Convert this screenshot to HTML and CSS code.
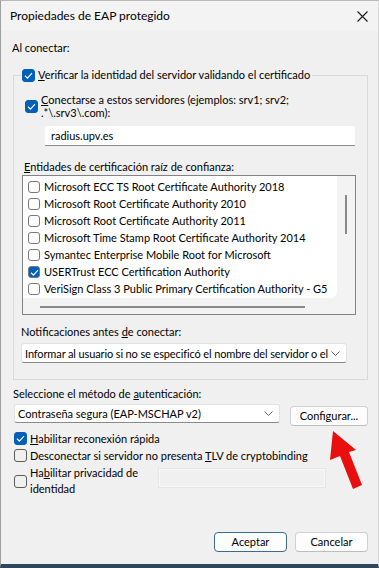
FILE: index.html
```html
<!DOCTYPE html>
<html lang="es">
<head>
    <meta charset="UTF-8">
    <title>Propiedades de EAP protegido</title>
    <link rel="stylesheet" href="styles.css">
</head>
<body>
<div class="window">
    <div class="titlebar">
        <span class="title">Propiedades de EAP protegido</span>
        <svg class="close" width="11" height="11" viewBox="0 0 11 11"><path d="M0.5 0.5L10.5 10.5M10.5 0.5L0.5 10.5" stroke="#1a1a1a" stroke-width="1.1" fill="none"/></svg>
    </div>
    <div class="content">
        <div class="label">Al conectar:</div>
        <fieldset class="group">
            <legend class="check">
                <span class="cb on"><svg width="13" height="13" viewBox="0 0 13 13"><path d="M3 6.8L5.4 9.1L10 4.2" stroke="#fff" stroke-width="1.2" fill="none"/></svg></span>
                <span><u>V</u>erificar la identidad del servidor validando el certificado</span>
            </legend>
            <div class="check servers">
                <span class="cb on"><svg width="13" height="13" viewBox="0 0 13 13"><path d="M3 6.8L5.4 9.1L10 4.2" stroke="#fff" stroke-width="1.2" fill="none"/></svg></span>
                <span><u>C</u>onectarse a estos servidores (ejemplos: srv1; srv2;<br>.*\.srv3\.com):</span>
            </div>
            <div class="textbox server-box">radius.upv.es</div>
            <div class="label sub-label"><u>E</u>ntidades de certificación raíz de confianza:</div>
            <div class="list">
                <div class="list-body">
                    <div class="items">
                        <div class="item"><span class="cb"></span>Microsoft ECC TS Root Certificate Authority 2018</div>
                        <div class="item"><span class="cb"></span>Microsoft Root Certificate Authority 2010</div>
                        <div class="item"><span class="cb"></span>Microsoft Root Certificate Authority 2011</div>
                        <div class="item"><span class="cb"></span>Microsoft Time Stamp Root Certificate Authority 2014</div>
                        <div class="item"><span class="cb"></span>Symantec Enterprise Mobile Root for Microsoft</div>
                        <div class="item"><span class="cb on"><svg width="13" height="13" viewBox="0 0 13 13"><path d="M3 6.8L5.4 9.1L10 4.2" stroke="#fff" stroke-width="1.2" fill="none"/></svg></span>USERTrust ECC Certification Authority</div>
                        <div class="item"><span class="cb"></span>VeriSign Class 3 Public Primary Certification Authority - G5</div>
                    </div>
                    <div class="vscroll"><span class="vthumb"></span></div>
                </div>
                <div class="hscroll"><span class="hthumb"></span></div>
            </div>
            <div class="label notif-label">Notificaciones antes <u>d</u>e conectar:</div>
            <div class="select notif-select">
                <span class="notif-text">Informar al usuario si no se especificó el nombre del servidor o el</span>
                <svg class="chevron" width="9" height="5" viewBox="0 0 9 5"><path d="M0.5 0.5L4.5 4.5L8.5 0.5" stroke="#666" stroke-width="1" fill="none"/></svg>
            </div>
        </fieldset>

        <div class="label method-label">Seleccione el método de <u>a</u>utenticación:</div>
        <div class="method-row">
            <div class="select method-select">
                <span>Contraseña segura (EAP-MSCHAP v2)</span>
                <svg class="chevron" width="9" height="5" viewBox="0 0 9 5"><path d="M0.5 0.5L4.5 4.5L8.5 0.5" stroke="#666" stroke-width="1" fill="none"/></svg>
            </div>
            <div class="button config">Confi<u>g</u>urar...</div>
        </div>

        <div class="check opt fast">
            <span class="cb on"><svg width="13" height="13" viewBox="0 0 13 13"><path d="M3 6.8L5.4 9.1L10 4.2" stroke="#fff" stroke-width="1.2" fill="none"/></svg></span>
            <span><u>H</u>abilitar reconexión rápida</span>
        </div>
        <div class="check opt">
            <span class="cb off"></span>
            <span>Desconectar si servidor no presenta <u>T</u>LV de cryptobinding</span>
        </div>
        <div class="privacy-row">
            <div class="check opt privacy">
                <span class="cb off"></span>
                <span>Ha<u>b</u>ilitar privacidad de<br>identidad</span>
            </div>
            <div class="textbox disabled"></div>
        </div>

        <div class="footer">
            <div class="button default">Aceptar</div>
            <div class="button">Cancelar</div>
        </div>
    </div>

    <svg class="arrow" width="379" height="568" viewBox="0 0 379 568">
        <polygon points="333,431 356,450 349,452 362,485 353,489 340,456 330,460" fill="#ea0f0f"/>
    </svg>
</div>
</body>
</html>
```

FILE: styles.css
```css
* {
    margin: 0;
    padding: 0;
    box-sizing: border-box;
}

body {
    background-color: #f0f0f0;
    font-family: Lato, "Noto Sans", sans-serif;
    font-size: 11px;
    color: #000;
}

.window {
    width: 379px;
    height: 568px;
    position: relative;
    border-left: 1px solid #a0a0a0;
    border-right: 1px solid #d8d8d8;
    border-top: 1px solid #b8b8b8;
    border-bottom: 4px solid #30465a;
    background-color: #f0f0f0;
    overflow: hidden;
}

.titlebar {
    height: 30px;
    display: flex;
    align-items: center;
    justify-content: space-between;
    padding: 0 10px 0 9px;
    background-color: #f3f3f3;
}
.title {
    font-size: 12px;
    line-height: 16px;
}

.content {
    padding: 0 10px 0 11px;
}

.label {
    line-height: 16px;
    height: 16px;
    white-space: nowrap;
}
.content > .label:first-child {
    margin-top: 9px;
}

.check {
    display: flex;
    align-items: center;
    line-height: 16px;
    white-space: nowrap;
}

.cb {
    width: 13px;
    height: 13px;
    border-radius: 3px;
    border: 1px solid #8a8a8a;
    background-color: #fdfdfd;
    display: block;
    flex: none;
}
.cb svg {
    display: block;
    margin: -1px;
}
.cb.on {
    background-color: #005fb8;
    border-color: #005fb8;
}
.cb.off {
    background-color: transparent;
    border-color: #5c5c5c;
}

.group {
    margin: 11px 0 0 1px;
    border: 1px solid #d9d9d9;
    padding: 0 0 16px 0;
}
.group legend {
    margin-left: 7px;
    padding: 0 2px 0 1px;
    gap: 3px;
}

.servers {
    margin: 10px 0 0 11px;
    line-height: 13px;
    gap: 3px;
}

.textbox {
    background-color: #fff;
    border-bottom: 1px solid #8a8a8a;
    height: 20px;
    line-height: 19px;
    padding-left: 6px;
}
.server-box {
    margin: 7px 0 0 31px;
    width: 310px;
}

.sub-label {
    margin: 13px 0 0 10px;
}

.list {
    margin-left: 8px;
    width: 334px;
    height: 140px;
    border: 1px solid #838383;
    background-color: #f3f3f3;
    display: flex;
    flex-direction: column;
}
.list-body {
    display: flex;
    height: 122px;
}
.items {
    width: 314px;
    background-color: #fff;
    border-bottom-right-radius: 6px;
    padding-top: 2px;
    overflow: hidden;
}
.item {
    height: 17px;
    display: flex;
    align-items: center;
    gap: 4px;
    padding-left: 5px;
    white-space: nowrap;
}
.item .cb {
    width: 12px;
    height: 12px;
    border-color: #7a7a7a;
}
.vscroll {
    flex: 1;
    padding: 19px 0 0 8px;
}
.vthumb {
    display: block;
    width: 2px;
    height: 39px;
    background-color: #8a8a8a;
}
.hscroll {
    flex: 1;
    padding: 8px 0 0 17px;
}
.hthumb {
    display: block;
    width: 265px;
    height: 2px;
    background-color: #8a8a8a;
}

.notif-label {
    margin: 9px 0 0 7px;
}

.select {
    background-color: #fff;
    border: 1px solid #e2e2e2;
    border-bottom-color: #8a8a8a;
    border-radius: 3px;
    display: flex;
    align-items: center;
    justify-content: space-between;
    white-space: nowrap;
    overflow: hidden;
}
.chevron {
    flex: none;
}
.notif-select {
    margin: 3px 0 0 7px;
    width: 326px;
    height: 20px;
    padding: 0 6px 0 3px;
}
.notif-text {
    letter-spacing: -0.12px;
}

.method-label {
    margin-top: 6px;
    padding-left: 1px;
}

.method-row {
    display: flex;
    align-items: flex-start;
    gap: 10px;
    margin-top: 2px;
    padding-left: 2px;
}
.method-select {
    width: 266px;
    height: 19px;
    padding: 0 6px 0 3px;
}

.button {
    height: 20px;
    width: 73px;
    border: 1px solid #d0d0d0;
    border-bottom-color: #bdbdbd;
    border-radius: 4px;
    background-color: #fdfdfd;
    display: flex;
    align-items: center;
    justify-content: center;
    line-height: 16px;
}
.config {
    width: 78px;
    margin-top: 2px;
}
.button.default {
    border-color: #3a6c90;
}

.opt {
    height: 17px;
    gap: 3px;
    padding-left: 2px;
}
.opt.fast {
    margin-top: 4px;
}

.privacy-row {
    display: flex;
    align-items: flex-start;
}
.privacy {
    height: 32px;
    width: 146px;
    margin-top: 1px;
}
.textbox.disabled {
    width: 168px;
    height: 20px;
    margin-top: 4px;
    background-color: transparent;
    border: 1px solid #e6e6e6;
    box-shadow: inset 0 0 0 1px #f7f7f7;
}

.footer {
    display: flex;
    justify-content: flex-end;
    gap: 8px;
    margin-top: 35px;
}

.arrow {
    position: absolute;
    top: -1px;
    left: -1px;
    pointer-events: none;
}
```
